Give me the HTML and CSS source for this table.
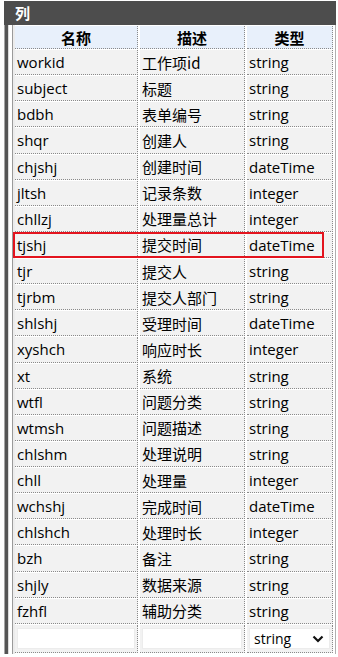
FILE: index.html
```html
<!DOCTYPE html>
<html lang="zh">
<head>
<meta charset="utf-8">
<link rel="stylesheet" href="styles.css">
</head>
<body>
<div class="panel">
  <div class="title">列</div>
  <div class="body">
    <div class="rail"></div>
    <div class="grid">
      <table class="cols">
        <colgroup><col class="c1"><col class="c2"><col class="c3"></colgroup>
        <thead>
          <tr><th>名称</th><th>描述</th><th>类型</th></tr>
        </thead>
        <tbody>
          <tr><td>workid</td><td>工作项id</td><td>string</td></tr>
          <tr><td>subject</td><td>标题</td><td>string</td></tr>
          <tr><td>bdbh</td><td>表单编号</td><td>string</td></tr>
          <tr><td>shqr</td><td>创建人</td><td>string</td></tr>
          <tr><td>chjshj</td><td>创建时间</td><td>dateTime</td></tr>
          <tr><td>jltsh</td><td>记录条数</td><td>integer</td></tr>
          <tr><td>chllzj</td><td>处理量总计</td><td>integer</td></tr>
          <tr class="marked"><td>tjshj</td><td>提交时间</td><td>dateTime</td></tr>
          <tr><td>tjr</td><td>提交人</td><td>string</td></tr>
          <tr><td>tjrbm</td><td>提交人部门</td><td>string</td></tr>
          <tr><td>shlshj</td><td>受理时间</td><td>dateTime</td></tr>
          <tr><td>xyshch</td><td>响应时长</td><td>integer</td></tr>
          <tr><td>xt</td><td>系统</td><td>string</td></tr>
          <tr><td>wtfl</td><td>问题分类</td><td>string</td></tr>
          <tr><td>wtmsh</td><td>问题描述</td><td>string</td></tr>
          <tr><td>chlshm</td><td>处理说明</td><td>string</td></tr>
          <tr><td>chll</td><td>处理量</td><td>integer</td></tr>
          <tr><td>wchshj</td><td>完成时间</td><td>dateTime</td></tr>
          <tr><td>chlshch</td><td>处理时长</td><td>integer</td></tr>
          <tr><td>bzh</td><td>备注</td><td>string</td></tr>
          <tr><td>shjly</td><td>数据来源</td><td>string</td></tr>
          <tr><td>fzhfl</td><td>辅助分类</td><td>string</td></tr>
          <tr class="new-row">
            <td><input class="field" type="text"></td>
            <td><input class="field" type="text"></td>
            <td>
              <div class="select-wrap">
                <select class="select">
                  <option>string</option>
                  <option>integer</option>
                  <option>dateTime</option>
                </select>
                <svg class="chev" width="12" height="8" viewBox="0 0 12 8"><path d="M1.5 1.5 L6 6 L10.5 1.5" fill="none" stroke="#111" stroke-width="2.2"/></svg>
              </div>
            </td>
          </tr>
        </tbody>
      </table>
      <div class="highlight"></div>
    </div>
  </div>
</div>
</body>
</html>
```

FILE: styles.css
```css
html, body {
  margin: 0;
  padding: 0;
  background: #ffffff;
}

body {
  font-family: "Open Sans", "Noto Sans CJK SC", sans-serif;
  font-size: 15px;
  color: #000;
}

.panel {
  margin: 1px 0 0 4px;
  width: 332px;
}

.title {
  height: 24px;
  line-height: 24px;
  background: #4d4d4d;
  color: #fff;
  font-weight: bold;
  font-size: 15px;
  padding-left: 11px;
  font-family: "Noto Sans CJK SC", sans-serif;
}

.body {
  display: flex;
}

.rail {
  width: 3px;
  background: #555;
  border-left: 1px solid #a6a6a6;
  border-right: 1px solid #dcdcdc;
  margin-right: 3px;
}

.grid {
  position: relative;
  flex: 1;
  background: #fff;
  border-left: 1px solid #9a9a9a;
  border-right: 1px solid #b0b0b0;
  box-shadow: inset 2px 0 0 #ececec;
}

.cols {
  border-collapse: separate;
  border-spacing: 2px 1px;
  table-layout: fixed;
  width: 322px;
}

.c1 { width: 123px; }
.c2 { width: 105px; }
.c3 { width: 86px; }

.cols th,
.cols td {
  border-right: 1px dotted #8a8a8a;
  border-bottom: 1px dotted #8a8a8a;
  padding: 0 2px;
  white-space: nowrap;
  overflow: hidden;
}

.cols th {
  background: #e8f0fb;
  height: 22px;
  font-weight: bold;
  text-align: center;
  font-family: "Noto Sans CJK SC", sans-serif;
  font-size: 15px;
}

.cols td {
  background: #f2f2f2;
  height: 24.14px;
  text-align: left;
}

.cols td:nth-child(2) {
  font-family: "Noto Sans CJK SC", sans-serif;
}

.new-row td {
  height: 27px;
  padding: 0 2px;
}

.field {
  display: block;
  box-sizing: border-box;
  width: 100%;
  height: 21px;
  margin: 0;
  border: 1px solid #ececec;
  background: #fff;
  font: inherit;
}

.select-wrap {
  position: relative;
  height: 21px;
}

.select {
  appearance: none;
  -webkit-appearance: none;
  display: block;
  box-sizing: border-box;
  width: 100%;
  height: 21px;
  margin: 0;
  padding: 0 0 0 4px;
  border: 1px solid #ececec;
  border-radius: 0;
  background: #fff;
  color: #000;
  font-family: "Open Sans", sans-serif;
  font-size: 14px;
}

.chev {
  position: absolute;
  right: 6px;
  top: 7px;
  pointer-events: none;
}

.highlight {
  position: absolute;
  left: 0;
  top: 207px;
  width: 307px;
  height: 22px;
  border: 2px solid #e3141e;
  pointer-events: none;
}
```
